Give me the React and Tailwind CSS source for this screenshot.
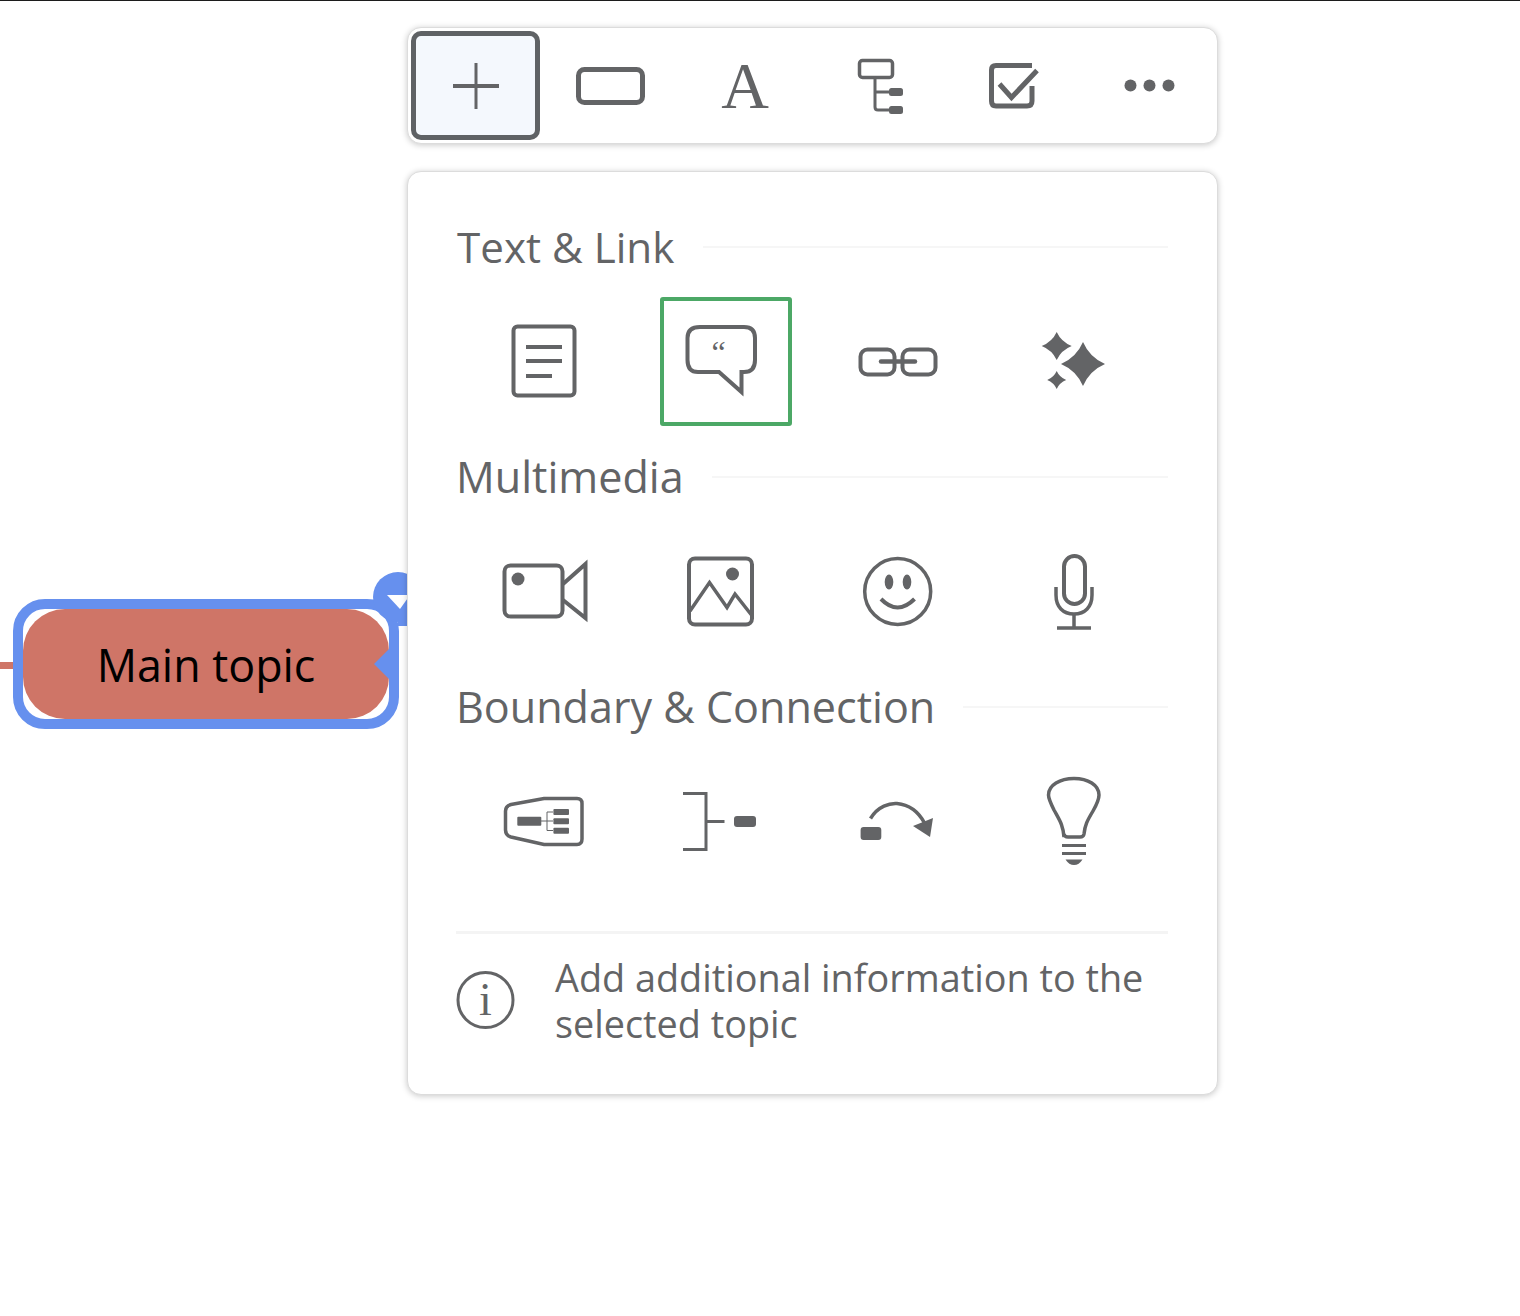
const C = "#636466";

function Ico({ vb, w = 130, h = 130, children }) {
  return (
    <svg width={w} height={h} viewBox={vb} fill="none" stroke={C} strokeWidth="4" className="block shrink-0">
      {children}
    </svg>
  );
}

function star(cx, cy, rx, ry, k = 0.3) {
  const a = rx * k, b = ry * k;
  return `M${cx} ${cy - ry}Q${cx + a} ${cy - b} ${cx + rx} ${cy}Q${cx + a} ${cy + b} ${cx} ${cy + ry}Q${cx - a} ${cy + b} ${cx - rx} ${cy}Q${cx - a} ${cy - b} ${cx} ${cy - ry}Z`;
}

function Heading({ children }) {
  return (
    <div className="flex h-[56px] items-center gap-[28px]">
      <span className="text-[43.1px] leading-[56px] text-[#636466] whitespace-nowrap">{children}</span>
      <div className="h-[2px] flex-1 bg-[#f6f6f6]" />
    </div>
  );
}

function Row({ children }) {
  return (
    <div className="grid grid-cols-[176px_176px_178px_176px] pt-[21px] pb-[23px]">{children}</div>
  );
}

function Cell({ children }) {
  return <div className="relative flex h-[130px] items-center justify-center">{children}</div>;
}

export default function App() {
  return (
    <div className="relative h-[1316px] w-[1520px] overflow-hidden border-t border-[#1c1c1c] bg-white font-['Open_Sans',sans-serif]">
      {/* Mind map node on the canvas */}
      <div className="absolute left-0 top-[661px] h-[7px] w-[14px] bg-[#cf7567]" />
      <div className="absolute left-[13px] top-[598px] flex h-[130px] w-[386px] items-center justify-center rounded-[32px] border-[10px] border-[#6690ee] bg-white">
        <div className="flex h-[110px] w-[366px] items-center justify-center rounded-[42px] bg-[#cf7567] pt-[2px] text-[44.8px] leading-none text-black">
          Main topic
        </div>
      </div>
      <svg width="30" height="40" viewBox="372 640 30 40" className="absolute left-[372px] top-[639px]">
        <path d="M374 664L390 648V680Z" fill="#6690ee" />
      </svg>
      <div className="absolute left-[373px] top-[571px] h-[50px] w-[50px] rounded-full bg-[#6690ee]" />
      <div className="absolute left-[398px] top-[600px] h-[25px] w-[10px] bg-[#6690ee]" />
      <svg width="24" height="16" viewBox="386 594 24 16" className="absolute left-[386px] top-[593px]">
        <path d="M387 595H410V595L400 609Z" fill="#fff" />
      </svg>

      <div className="relative z-10 ml-[407px] w-[811px] pt-[26px]">
        {/* Toolbar */}
        <div className="flex h-[117px] rounded-[14px] border border-[#dcdcdc] bg-white pl-[3px] pt-[3px] shadow-[0_1px_6px_rgba(0,0,0,0.22)]">
          <div className="flex h-[109px] w-[129px] items-center justify-center rounded-[10px] border-[5px] border-[#5f6265] bg-[#f4f8fd]">
            <svg width="46" height="46" viewBox="0 0 46 46" className="block">
              <path d="M23 0V46" stroke={C} strokeWidth="3" />
              <path d="M0 23H46" stroke={C} strokeWidth="4" />
            </svg>
          </div>
          <Ico vb="540 31 135 107" w={135} h={107}>
            <rect x="578.5" y="69.5" width="64" height="33" rx="6" strokeWidth="5" />
          </Ico>
          <Ico vb="675 31 135 107" w={135} h={107}>
            <text x="745" y="108" textAnchor="middle" fontFamily="'Liberation Serif',serif" fontSize="66" fill={C} stroke="none">A</text>
          </Ico>
          <Ico vb="810 31 135 107" w={135} h={107}>
            <rect x="859.5" y="60.5" width="33" height="17" rx="3" strokeWidth="3.5" />
            <path d="M875 78V107Q875 110 878 110H892M875 92H892" strokeWidth="3" />
            <rect x="889" y="88" width="14" height="8" rx="2.5" fill={C} stroke="none" />
            <rect x="889" y="106" width="14" height="8" rx="2.5" fill={C} stroke="none" />
          </Ico>
          <Ico vb="945 31 135 107" w={135} h={107}>
            <path d="M1032 65.500H996Q991.500 65.500 991.500 70V101Q991.500 106 996 106H1027Q1032 106 1032 101V86" strokeWidth="5" />
            <path d="M999.500 84L1011.500 97.500L1037 70.500" strokeWidth="5" />
          </Ico>
          <Ico vb="1080 31 135 107" w={135} h={107}>
            <circle cx="1130.500" cy="85.500" r="6" fill={C} stroke="none" />
            <circle cx="1149.500" cy="85.500" r="6" fill={C} stroke="none" />
            <circle cx="1168.500" cy="85.500" r="6" fill={C} stroke="none" />
          </Ico>
        </div>

        {/* Panel */}
        <div className="mt-[27px] h-[924px] rounded-[14px] border border-[#dcdcdc] bg-white pl-[48px] pr-[49px] pt-[47px] shadow-[0_1px_6px_rgba(0,0,0,0.22)]">
          <div className="flex h-[56px] items-center gap-[29px] pl-[1px]">
            <span className="text-[42.2px] leading-[56px] text-[#636466] whitespace-nowrap">Text &amp; Link</span>
            <div className="h-[2px] flex-1 bg-[#f6f6f6]" />
          </div>
          <Row>
            <Cell>
              <Ico vb="479 296 130 130">
                <rect x="513.500" y="326.500" width="61" height="69" rx="4" />
                <path d="M526 347H562M526 361H562M526 376H552" />
              </Ico>
            </Cell>
            <Cell>
              <div className="absolute left-[28px] top-[1px] h-[129px] w-[132px] rounded-[3px] border-[4px] border-[#4ca866]" />
              <Ico vb="655 296 130 130">
                <path d="M700 327H744Q755 327 755 338V360Q755 372 744 372H741.500V392L719 372H698Q687.500 372 687.500 360V338Q687.500 327 700 327Z" />
                <text x="718.500" y="363" textAnchor="middle" fontFamily="'Liberation Serif',serif" fontSize="32" fill={C} stroke="none">“</text>
              </Ico>
            </Cell>
            <Cell>
              <Ico vb="832 296 130 130">
                <rect x="860.500" y="349.500" width="34" height="25" rx="7" />
                <rect x="902.500" y="349.500" width="33" height="25" rx="7" />
                <path d="M881 361.500H915" strokeWidth="4.500" strokeLinecap="round" />
              </Ico>
            </Cell>
            <Cell>
              <Ico vb="1009 296 130 130">
                <path d={star(1083, 364, 22, 22)} fill={C} stroke="none" />
                <path d={star(1056.700, 346, 15, 14)} fill={C} stroke="none" />
                <path d={star(1056.700, 380, 9.500, 9)} fill={C} stroke="none" />
              </Ico>
            </Cell>
          </Row>

          <Heading>Multimedia</Heading>
          <Row>
            <Cell>
              <Ico vb="479 526 130 130">
                <rect x="504.500" y="565.500" width="58" height="51" rx="6" />
                <circle cx="518" cy="579" r="6.500" fill={C} stroke="none" />
                <path d="M563 584L585.500 564V618L563 600" />
              </Ico>
            </Cell>
            <Cell>
              <Ico vb="655 526 130 130">
                <rect x="689" y="558.500" width="63" height="66" rx="6" />
                <circle cx="732.500" cy="574" r="6.500" fill={C} stroke="none" />
                <path d="M690 611L709.500 582.500L727 607.500L735 594L751.500 615" strokeWidth="3.500" />
              </Ico>
            </Cell>
            <Cell>
              <Ico vb="832 526 130 130">
                <circle cx="897.700" cy="591.500" r="33" strokeWidth="3.500" />
                <ellipse cx="889" cy="582" rx="4.300" ry="7.500" fill={C} stroke="none" />
                <ellipse cx="907" cy="582" rx="4.300" ry="7.500" fill={C} stroke="none" />
                <path d="M881 599Q897.500 616 914.500 599" />
              </Ico>
            </Cell>
            <Cell>
              <Ico vb="1009 526 130 130">
                <rect x="1064" y="556" width="21" height="48" rx="10.500" />
                <path d="M1056 587V595C1056 607 1063 614 1074 614C1085 614 1092 607 1092 595V587" strokeWidth="3.500" />
                <path d="M1074 614V628M1057 628H1091" strokeWidth="3.500" />
              </Ico>
            </Cell>
          </Row>

          <Heading>Boundary &amp; Connection</Heading>
          <Row>
            <Cell>
              <Ico vb="479 756 130 130">
                <path d="M511 804.500L544 798.500H577Q582 798.500 582 803.500V839Q582 844.500 577 844.500H544L511 837Q505.500 835.500 505.500 830V811Q505.500 806 511 804.500Z" strokeWidth="3.500" />
                <rect x="517.300" y="816.700" width="24" height="9" rx="1" fill={C} stroke="none" />
                <rect x="553.400" y="809" width="15.600" height="6" rx="1" fill={C} stroke="none" />
                <rect x="553.400" y="818.300" width="15.600" height="6" rx="1" fill={C} stroke="none" />
                <rect x="553.400" y="827.700" width="15.600" height="6" rx="1" fill={C} stroke="none" />
                <path d="M541 821H553M547 812H553M547 812V830.500H553" strokeWidth="1" />
              </Ico>
            </Cell>
            <Cell>
              <Ico vb="655 756 130 130">
                <path d="M683 793.500H706V849.500H683M706 821.500H724.500" strokeWidth="3" />
                <rect x="734" y="816" width="22" height="11" rx="3" fill={C} stroke="none" />
              </Ico>
            </Cell>
            <Cell>
              <Ico vb="832 756 130 130">
                <rect x="860.600" y="827" width="20.700" height="13" rx="3" fill={C} stroke="none" />
                <path d="M870.500 818.500C878 806 890 803 897 803.500C908 804.500 918 811 924.500 823" strokeWidth="3.500" />
                <path d="M933 818L930 837L913 826Z" fill={C} stroke="none" />
              </Ico>
            </Cell>
            <Cell>
              <Ico vb="1009 756 130 130">
                <path d="M1064 837C1063 825 1060 821 1054 810C1050 802 1048.500 798 1048.500 795C1048.500 785 1060 778.500 1074 778.500C1088 778.500 1099 785 1099 795C1099 800 1097 804 1093 811C1087 821 1085 825 1084 834Q1083.500 837 1080 837H1068Q1064.500 837 1064 834" strokeWidth="3.500" />
                <path d="M1062 845.500H1086M1062 853.500H1086" strokeWidth="3" />
                <path d="M1065.500 859.500H1082.500Q1079 865 1074 865Q1069 865 1065.500 859.500Z" fill={C} stroke="none" />
              </Ico>
            </Cell>
          </Row>

          <div className="mt-[22px] h-[3px] bg-[#f4f4f4]" />
          <div className="mt-[21px] flex items-start">
            <svg width="60" height="60" viewBox="0 0 60 60" className="mt-[15px] block shrink-0">
              <circle cx="29.500" cy="30" r="27.500" fill="none" stroke={C} strokeWidth="3" />
              <text x="29.500" y="45" textAnchor="middle" fontFamily="'Liberation Serif',serif" fontSize="46" fill={C}>i</text>
            </svg>
            <p className="ml-[39px] text-[37.8px] leading-[46px] text-[#636466] whitespace-nowrap">
              Add additional information to the
              <br />
              selected topic
            </p>
          </div>
        </div>
      </div>
    </div>
  );
}
